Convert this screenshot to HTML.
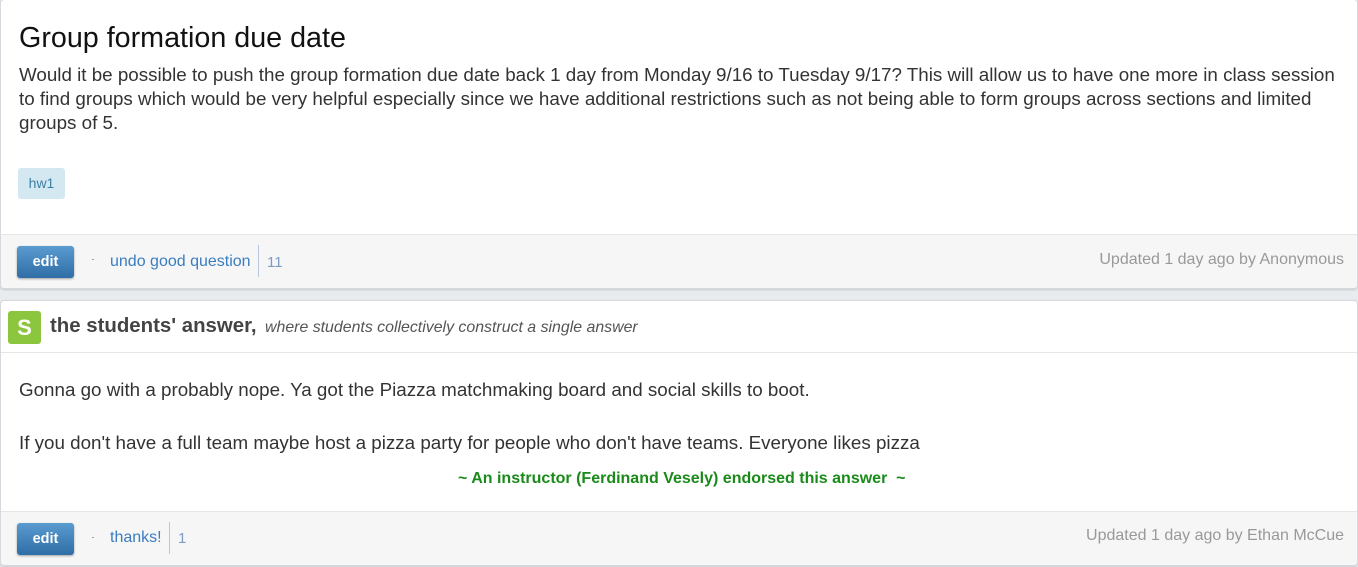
<!DOCTYPE html>
<html><head><style>
body{margin:0;width:1358px;height:567px;background:#e9ecef;font-family:"Liberation Sans",Arial,sans-serif;position:relative;overflow:hidden}
.card{position:absolute;left:0;width:1356px;background:#fff;border:1px solid #d5d8dc;border-radius:4px;box-shadow:0 1px 2px rgba(0,0,0,.15)}
.abs{position:absolute;white-space:nowrap}
.foot{position:absolute;left:0;right:0;bottom:0;background:#f6f6f6;border-top:1px solid #e6e6e6;border-radius:0 0 4px 4px}
.btn{position:absolute;left:16px;width:57px;height:32px;border-radius:3px;background:linear-gradient(#5a9bd0,#2f6ea6);color:#fff;font-weight:bold;font-size:14.5px;text-align:center;line-height:32px;box-shadow:0 1px 2px rgba(0,0,0,.35)}
.link{color:#3a7dc1;font-size:16px}
.sep{position:absolute;width:1px;background:#b8c8dc}
.cnt{color:#7d9cc4;font-size:15px}
.upd{color:#999;font-size:16px;right:13px}
</style></head><body>
<div class="card" style="top:-1px;height:288px">
 <div class="abs" style="left:18px;top:22px;font-size:28.7px;color:#111">Group formation due date</div>
 <div class="abs" style="left:18px;top:63px;font-size:18.8px;color:#333;line-height:24px;white-space:normal;width:1325px">Would it be possible to push the group formation due date back 1 day from Monday 9/16 to Tuesday 9/17? This will allow us to have one more in class session to find groups which would be very helpful especially since we have additional restrictions such as not being able to form groups across sections and limited groups of 5.</div>
 <div class="abs" style="left:17px;top:168px;width:47px;height:31px;background:#d4e8f1;border-radius:3px;color:#3d7fa5;font-size:14px;text-align:center;line-height:31px">hw1</div>
 <div class="foot" style="height:53px">
  <div class="btn" style="top:11px">edit</div>
  <div class="abs" style="left:91px;top:24px;width:2px;height:1px;background:#8ab"></div>
  <div class="abs link" style="left:109px;top:18px">undo good question</div>
  <div class="sep" style="left:257px;top:10px;height:32px"></div>
  <div class="abs cnt" style="left:266px;top:19px">11</div>
  <div class="abs upd" style="top:16px">Updated 1 day ago by Anonymous</div>
 </div>
</div>
<div class="card" style="top:300px;height:264px">
 <div class="abs" style="left:7px;top:10px;width:33px;height:33px;background:#8cc63f;border-radius:3px;color:#fff;font-weight:bold;font-size:22px;text-align:center;line-height:33px">S</div>
 <div class="abs" style="left:49px;top:14px;font-size:20.4px;font-weight:bold;color:#444">the students' answer,</div>
 <div class="abs" style="left:264px;top:18px;font-size:15.9px;font-style:italic;color:#555">where students collectively construct a single answer</div>
 <div class="abs" style="left:0;right:0;top:51px;height:1px;background:#e6e6e6"></div>
 <div class="abs" style="left:18px;top:78px;font-size:18.8px;color:#333">Gonna go with a probably nope. Ya got the Piazza matchmaking board and social skills to boot.</div>
 <div class="abs" style="left:18px;top:131px;font-size:18.8px;color:#333">If you don't have a full team maybe host a pizza party for people who don't have teams. Everyone likes pizza</div>
 <div class="abs" style="left:457px;top:169px;font-size:16px;font-weight:bold;color:#1a8a1a">~ An instructor (Ferdinand Vesely) endorsed this answer&nbsp; ~</div>
 <div class="foot" style="height:53px">
  <div class="btn" style="top:11px">edit</div>
  <div class="abs" style="left:91px;top:25px;width:2px;height:1px;background:#8ab"></div>
  <div class="abs link" style="left:109px;top:17px">thanks!</div>
  <div class="sep" style="left:168px;top:10px;height:32px"></div>
  <div class="abs cnt" style="left:177px;top:18px">1</div>
  <div class="abs upd" style="top:15px">Updated 1 day ago by Ethan McCue</div>
 </div>
</div>
</body></html>
